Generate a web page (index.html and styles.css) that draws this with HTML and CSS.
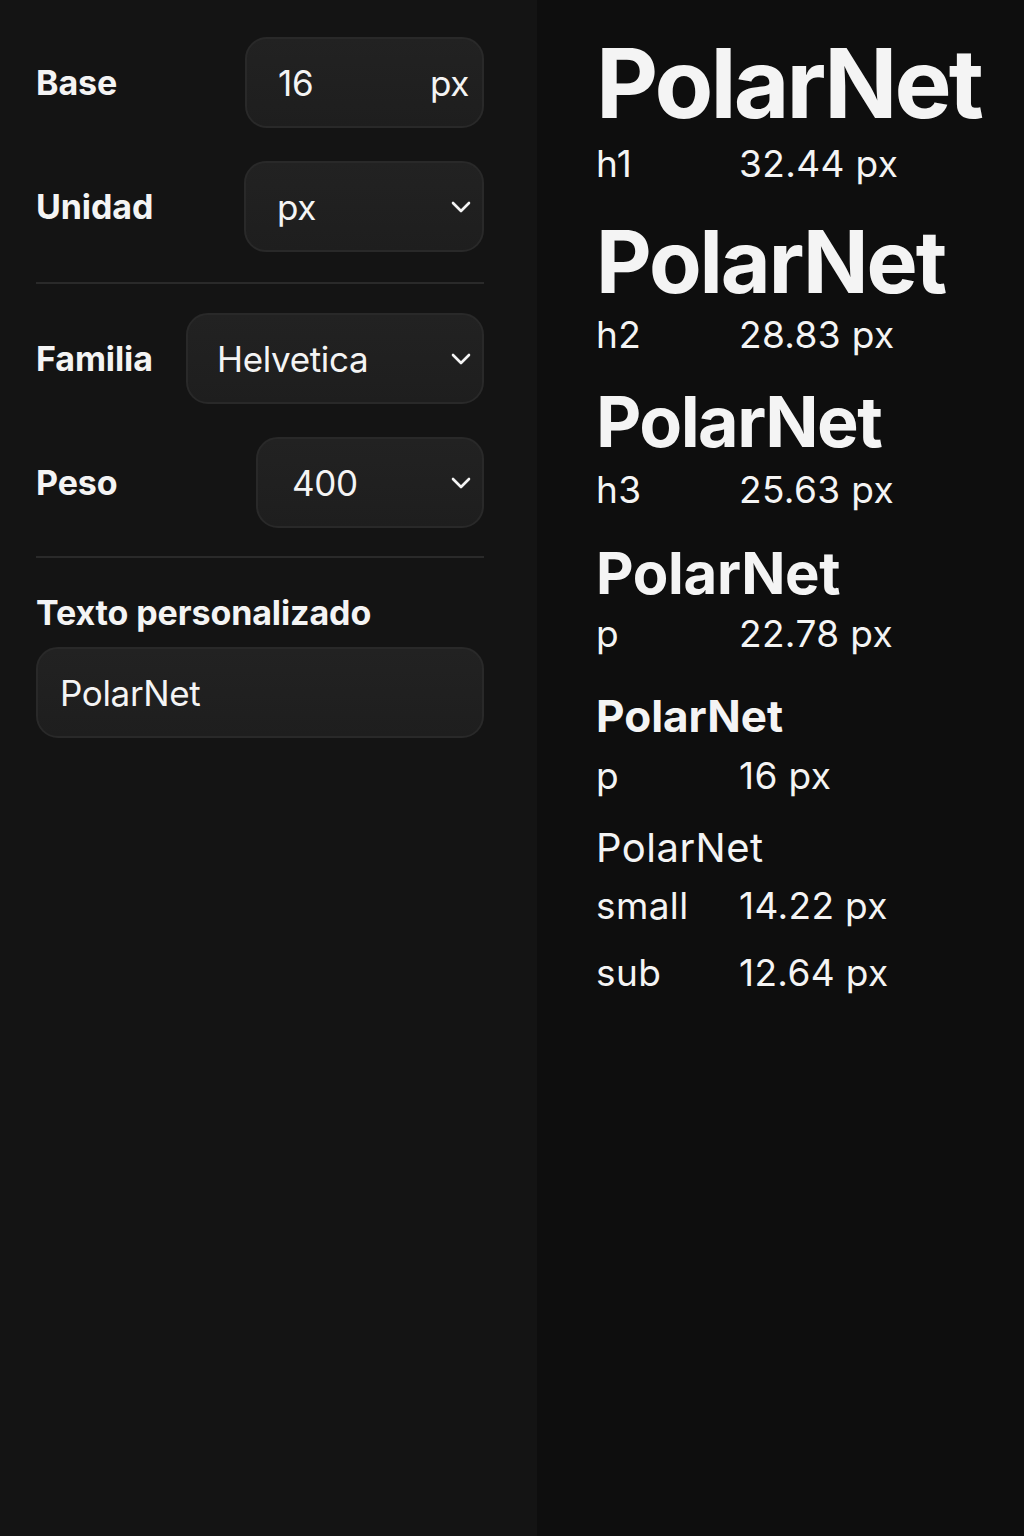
FILE: index.html
```html
<!DOCTYPE html>
<html lang="es">
<head>
<meta charset="utf-8">
<title>Escala tipográfica</title>
<link rel="stylesheet" href="styles.css">
</head>
<body>
<div class="app">
  <aside class="controls">
    <div class="row">
      <span class="label">Base</span>
      <div class="field field--base">
        <span class="field-value">16</span>
        <span class="field-suffix">px</span>
      </div>
    </div>
    <div class="row row--next">
      <span class="label">Unidad</span>
      <div class="field field--unit">
        <span class="field-value">px</span>
        <svg class="chev" viewBox="0 0 20 12" aria-hidden="true"><polyline points="2,2 10,10 18,2"/></svg>
      </div>
    </div>
    <hr class="divider divider--first">
    <div class="row">
      <span class="label">Familia</span>
      <div class="field field--family">
        <span class="field-value">Helvetica</span>
        <svg class="chev" viewBox="0 0 20 12" aria-hidden="true"><polyline points="2,2 10,10 18,2"/></svg>
      </div>
    </div>
    <div class="row row--next">
      <span class="label">Peso</span>
      <div class="field field--weight">
        <span class="field-value">400</span>
        <svg class="chev" viewBox="0 0 20 12" aria-hidden="true"><polyline points="2,2 10,10 18,2"/></svg>
      </div>
    </div>
    <hr class="divider divider--second">
    <div class="label label--block">Texto personalizado</div>
    <div class="field field--text">
      <span class="field-value">PolarNet</span>
    </div>
  </aside>
  <main class="preview">
    <div class="spec spec--h1">
      <div class="spec-sample">PolarNet</div>
      <div class="spec-meta"><span>h1</span><span>32.44 px</span></div>
    </div>
    <div class="spec spec--h2">
      <div class="spec-sample">PolarNet</div>
      <div class="spec-meta"><span>h2</span><span>28.83 px</span></div>
    </div>
    <div class="spec spec--h3">
      <div class="spec-sample">PolarNet</div>
      <div class="spec-meta"><span>h3</span><span>25.63 px</span></div>
    </div>
    <div class="spec spec--p1">
      <div class="spec-sample">PolarNet</div>
      <div class="spec-meta"><span>p</span><span>22.78 px</span></div>
    </div>
    <div class="spec spec--p2">
      <div class="spec-sample">PolarNet</div>
      <div class="spec-meta"><span>p</span><span>16 px</span></div>
    </div>
    <div class="spec spec--small">
      <div class="spec-sample">PolarNet</div>
      <div class="spec-meta"><span>small</span><span>14.22 px</span></div>
    </div>
    <div class="spec spec--sub">
      <div class="spec-meta"><span>sub</span><span>12.64 px</span></div>
    </div>
  </main>
</div>
</body>
</html>
```

FILE: styles.css
```css
* { box-sizing: border-box; }

html, body {
  margin: 0;
  padding: 0;
  height: 100%;
}

body {
  font-family: Inter, "Noto Sans", "Liberation Sans", sans-serif;
  color: #f4f4f4;
  background: #0e0e0e;
}

.app {
  display: flex;
  min-height: 1536px;
}

/* ---------- left controls ---------- */
.controls {
  width: 537px;
  flex: none;
  background: #141414;
  padding: 37px 53px 0 36px;
  display: flex;
  flex-direction: column;
}

.row {
  display: flex;
  align-items: center;
  justify-content: space-between;
}

.row--next { margin-top: 33px; }

.label {
  font-size: 34px;
  font-weight: 700;
  letter-spacing: -0.003em;
  line-height: 44px;
}

.label--block { margin-top: 33px; }

.field {
  height: 91px;
  border: 2px solid #292929;
  border-radius: 22px;
  background: linear-gradient(180deg, #222222 0%, #1e1e1e 100%);
  display: flex;
  align-items: center;
  justify-content: space-between;
  padding: 0 11px 0 31px;
  font-size: 35px;
  font-weight: 400;
  letter-spacing: -0.01em;
}

.field--base { width: 239px; padding-right: 12px; }
.field--base .field-suffix { margin-right: 1px; }
.field--unit { width: 240px; }
.field--family { width: 298px; padding-left: 29px; }
.field--weight { width: 228px; padding-left: 34px; }
.field--text { width: 448px; margin-top: 12px; padding-left: 22px; }

.chev {
  width: 20px;
  height: 12px;
  fill: none;
  stroke: #f4f4f4;
  stroke-width: 2.6;
  stroke-linecap: round;
  stroke-linejoin: round;
}

.divider {
  border: 0;
  height: 2px;
  background: #2a2a2a;
  margin: 0;
  width: 448px;
}

.divider--first { margin-top: 30px; margin-bottom: 29px; }
.divider--second { margin-top: 28px; }

/* ---------- right preview ---------- */
.preview {
  flex: 1;
  background: #0e0e0e;
  padding: 33px 0 0 59px;
  display: flex;
  flex-direction: column;
}

.spec-sample {
  font-weight: 700;
  letter-spacing: -0.03em;
  white-space: nowrap;
}

.spec-meta {
  display: grid;
  grid-template-columns: 143px auto;
  font-size: 37px;
  line-height: 44px;
  letter-spacing: 0.01em;
}

.spec--h1 .spec-sample { font-size: 96px; line-height: 100px; }
.spec--h1 .spec-meta { margin-top: 9px; }

.spec--h2 { margin-top: 33px; }
.spec--h2 .spec-sample { font-size: 86px; line-height: 86px; letter-spacing: -0.024em; }
.spec--h2 .spec-meta { margin-top: 8px; }

.spec--h3 { margin-top: 28px; }
.spec--h3 .spec-sample { font-size: 70px; line-height: 74px; letter-spacing: -0.022em; }
.spec--h3 .spec-meta { margin-top: 9px; }

.spec--p1 { margin-top: 31px; }
.spec--p1 .spec-sample { font-size: 58px; line-height: 60px; letter-spacing: -0.005em; }
.spec--p1 .spec-meta { margin-top: 9px; }

.spec--p2 { margin-top: 38px; }
.spec--p2 .spec-sample { font-size: 44px; line-height: 44px; letter-spacing: 0; }
.spec--p2 .spec-meta { margin-top: 16px; }

.spec--small { margin-top: 29px; }
.spec--small .spec-sample { font-size: 40px; line-height: 42px; font-weight: 400; letter-spacing: 0.012em; }
.spec--small .spec-meta { margin-top: 15px; }

.spec--sub { margin-top: 23px; }
```
